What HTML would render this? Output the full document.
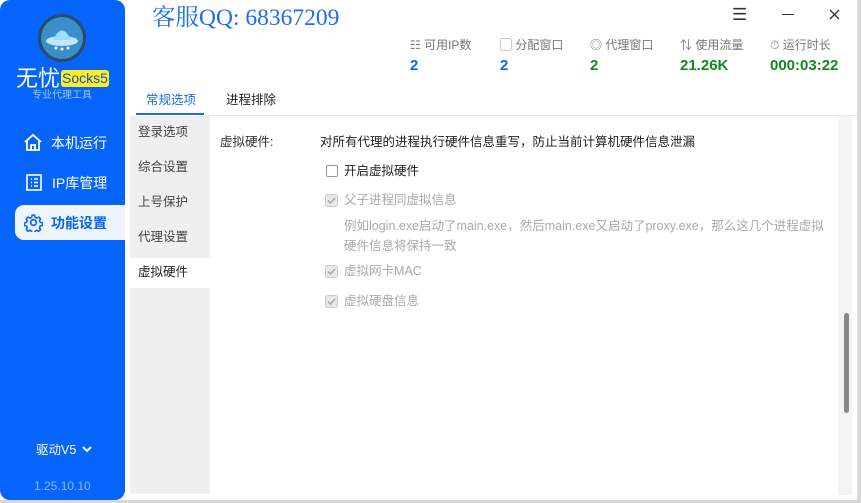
<!DOCTYPE html>
<html><head><meta charset="utf-8"><style>
*{margin:0;padding:0;box-sizing:border-box}
body{width:861px;height:503px;background:#fff;font-family:"Liberation Sans","Noto Sans CJK SC",sans-serif;position:relative;overflow:hidden;color:#222;line-height:1.2}
.a{position:absolute;white-space:nowrap}
#side{left:0;top:0;width:125px;height:500px;background:#0565fb;border-radius:10px}
.nav{color:#fff;font-size:14px}
.sub{font-size:12.5px;color:#444}
.g{color:#aaa;font-size:12.5px}
.lbl{font-size:12px;color:#777}
.val{font-size:15px;font-weight:bold}
</style></head><body>
<div class="a" style="left:857px;top:0;width:4px;height:503px;background:#d8d8d8"></div>
<div class="a" style="left:0;top:500px;width:861px;height:3px;background:#d8d8d8"></div>
<div class="a" id="side"></div>
<!-- logo -->
<svg class="a" style="left:37px;top:13px" width="50" height="50" viewBox="0 0 50 50">
<circle cx="25" cy="25" r="24" fill="#2a4a6a"/><circle cx="25" cy="25" r="21" fill="#3a8fc8"/>
<ellipse cx="25" cy="28" rx="16" ry="5" fill="#bfe8ff"/><path d="M16 27 Q25 8 34 27Z" fill="#9fdcff"/>
<circle cx="19" cy="35" r="1.5" fill="#eaf8ff"/><circle cx="25" cy="36" r="1.5" fill="#eaf8ff"/><circle cx="31" cy="35" r="1.5" fill="#eaf8ff"/>
</svg>
<div class="a" style="left:16px;top:66px;color:#fff;font-size:22px">无忧</div>
<div class="a" style="left:61px;top:70px;background:#ffee22;color:#1452d8;font-size:14px;padding:0 1px;border-radius:3px;line-height:17px">Socks5</div>
<div class="a" style="left:32px;top:90px;color:#9fc4ff;font-size:10px">专业代理工具</div>
<svg class="a" style="left:23px;top:133px" width="20" height="19" viewBox="0 0 20 19" fill="none" stroke="#fff" stroke-width="1.8"><path d="M2 9 L10 2 L18 9 M4 7 V17 H16 V7 M8 17 V12 H12 V17"/></svg>
<div class="a nav" style="left:51px;top:135px">本机运行</div>
<svg class="a" style="left:26px;top:174px" width="16" height="17" viewBox="0 0 16 17" fill="none" stroke="#fff" stroke-width="1.6"><rect x="1" y="1" width="14" height="15"/><path d="M5 5h1M8 5h4M5 8.5h1M8 8.5h4M5 12h1M8 12h4"/></svg>
<div class="a nav" style="left:52px;top:175px">IP库管理</div>
<div class="a" style="left:15px;top:205px;width:110px;height:35px;background:#eef5ff;border-radius:9px 0 0 9px"></div>
<svg class="a" style="left:24px;top:213px" width="19" height="19" viewBox="0 0 20 20" fill="none" stroke="#0565fb" stroke-width="1.8"><circle cx="10" cy="10" r="3"/><path d="M8.5 1.5h3l.5 2.5 2 1 2.3-1.2 2 2-1.2 2.3 1 2 2.5.5v3l-2.5.5-1 2 1.2 2.3-2 2-2.3-1.2-2 1-.5 2.5h-3l-.5-2.5-2-1-2.3 1.2-2-2 1.2-2.3-1-2-2.5-.5v-3l2.5-.5 1-2-1.2-2.3 2-2 2.3 1.2 2-1z" transform="scale(.9) translate(1 1)"/></svg>
<div class="a nav" style="left:51px;top:215px;color:#0565fb;font-weight:bold">功能设置</div>
<div class="a" style="left:36px;top:443px;color:#fff;font-size:12.5px">驱动V5</div>
<svg class="a" style="left:82px;top:446px" width="10" height="7" viewBox="0 0 10 7"><path d="M1 1l4 4 4-4" fill="none" stroke="#fff" stroke-width="2"/></svg>
<div class="a" style="left:34px;top:479px;color:#8fb8ff;font-size:12px">1.25.10.10</div>
<!-- header -->
<div class="a" style="left:152px;top:4px;color:#1a6fe8;font-size:23.5px;font-family:'Liberation Serif','Noto Serif CJK SC',serif">客服QQ: 68367209</div>
<div class="a" style="left:732px;top:5px;font-size:17px;color:#333">☰</div>
<div class="a" style="left:782px;top:14px;width:12px;height:1.3px;background:#333"></div>
<svg class="a" style="left:829px;top:9px" width="11" height="11" viewBox="0 0 11 11"><path d="M1 1l9 9M10 1l-9 9" stroke="#333" stroke-width="1.3"/></svg>
<div class="a lbl" style="left:410px;top:38px">☷ 可用IP数</div>
<div class="a lbl" style="left:500px;top:38px">▢ 分配窗口</div>
<div class="a lbl" style="left:590px;top:38px">◎ 代理窗口</div>
<div class="a lbl" style="left:680px;top:38px">⇅ 使用流量</div>
<div class="a lbl" style="left:770px;top:38px">⏱ 运行时长</div>
<div class="a val" style="left:410px;top:57px;color:#0d67f2">2</div>
<div class="a val" style="left:500px;top:57px;color:#0d67f2">2</div>
<div class="a val" style="left:590px;top:57px;color:#128a1b">2</div>
<div class="a val" style="left:680px;top:57px;color:#128a1b">21.26K</div>
<div class="a val" style="left:770px;top:57px;color:#128a1b">000:03:22</div>
<!-- tabs -->
<div class="a" style="left:146px;top:93px;font-size:12.5px;color:#1a6fe8">常规选项</div>
<div class="a" style="left:226px;top:93px;font-size:12.5px;color:#222">进程排除</div>
<div class="a" style="left:136px;top:113px;width:68px;height:2px;background:#1a6fe8"></div>
<div class="a" style="left:204px;top:115px;width:653px;height:1px;background:#e8e8e8"></div>
<!-- submenu -->
<div class="a" style="left:130px;top:116px;width:80px;height:378px;background:#efefef"></div>
<div class="a" style="left:130px;top:258px;width:80px;height:30px;background:#fff"></div>
<div class="a sub" style="left:138px;top:125px">登录选项</div>
<div class="a sub" style="left:138px;top:160px">综合设置</div>
<div class="a sub" style="left:138px;top:195px">上号保护</div>
<div class="a sub" style="left:138px;top:230px">代理设置</div>
<div class="a sub" style="left:138px;top:265px;color:#222">虚拟硬件</div>
<!-- scrollbar -->
<div class="a" style="left:838px;top:116px;width:14px;height:379px;background:#f4f4f4"></div>
<div class="a" style="left:844px;top:313px;width:5px;height:100px;background:#888;border-radius:3px"></div>
<!-- content -->
<div class="a" style="left:220px;top:135px;font-size:12.5px;color:#333">虚拟硬件:</div>
<div class="a" style="left:320px;top:135px;font-size:12.5px;color:#222">对所有代理的进程执行硬件信息重写，防止当前计算机硬件信息泄漏</div>
<div class="a" style="left:326px;top:165px;width:12px;height:12px;border:1px solid #999;border-radius:2px;background:#fff"></div>
<div class="a" style="left:344px;top:164px;font-size:12.5px;color:#222">开启虚拟硬件</div>
<svg width="0" height="0" style="position:absolute"><defs><g id="cb"><rect x=".5" y=".5" width="12" height="12" rx="2" fill="#e8e8e8" stroke="#ccc"/><path d="M3 6.5l2.5 2.5 4.5-5" fill="none" stroke="#aaa" stroke-width="1.6"/></g></defs></svg>
<svg class="a" style="left:325px;top:194px" width="13" height="13"><use href="#cb"/></svg>
<div class="a g" style="left:344px;top:193px">父子进程同虚拟信息</div>
<div class="a g" style="left:344px;top:219px">例如login.exe启动了main.exe，然后main.exe又启动了proxy.exe，那么这几个进程虚拟</div>
<div class="a g" style="left:344px;top:239px">硬件信息将保持一致</div>
<svg class="a" style="left:325px;top:265px" width="13" height="13"><use href="#cb"/></svg>
<div class="a g" style="left:344px;top:264px">虚拟网卡MAC</div>
<svg class="a" style="left:325px;top:295px" width="13" height="13"><use href="#cb"/></svg>
<div class="a g" style="left:344px;top:294px">虚拟硬盘信息</div>
</body></html>
